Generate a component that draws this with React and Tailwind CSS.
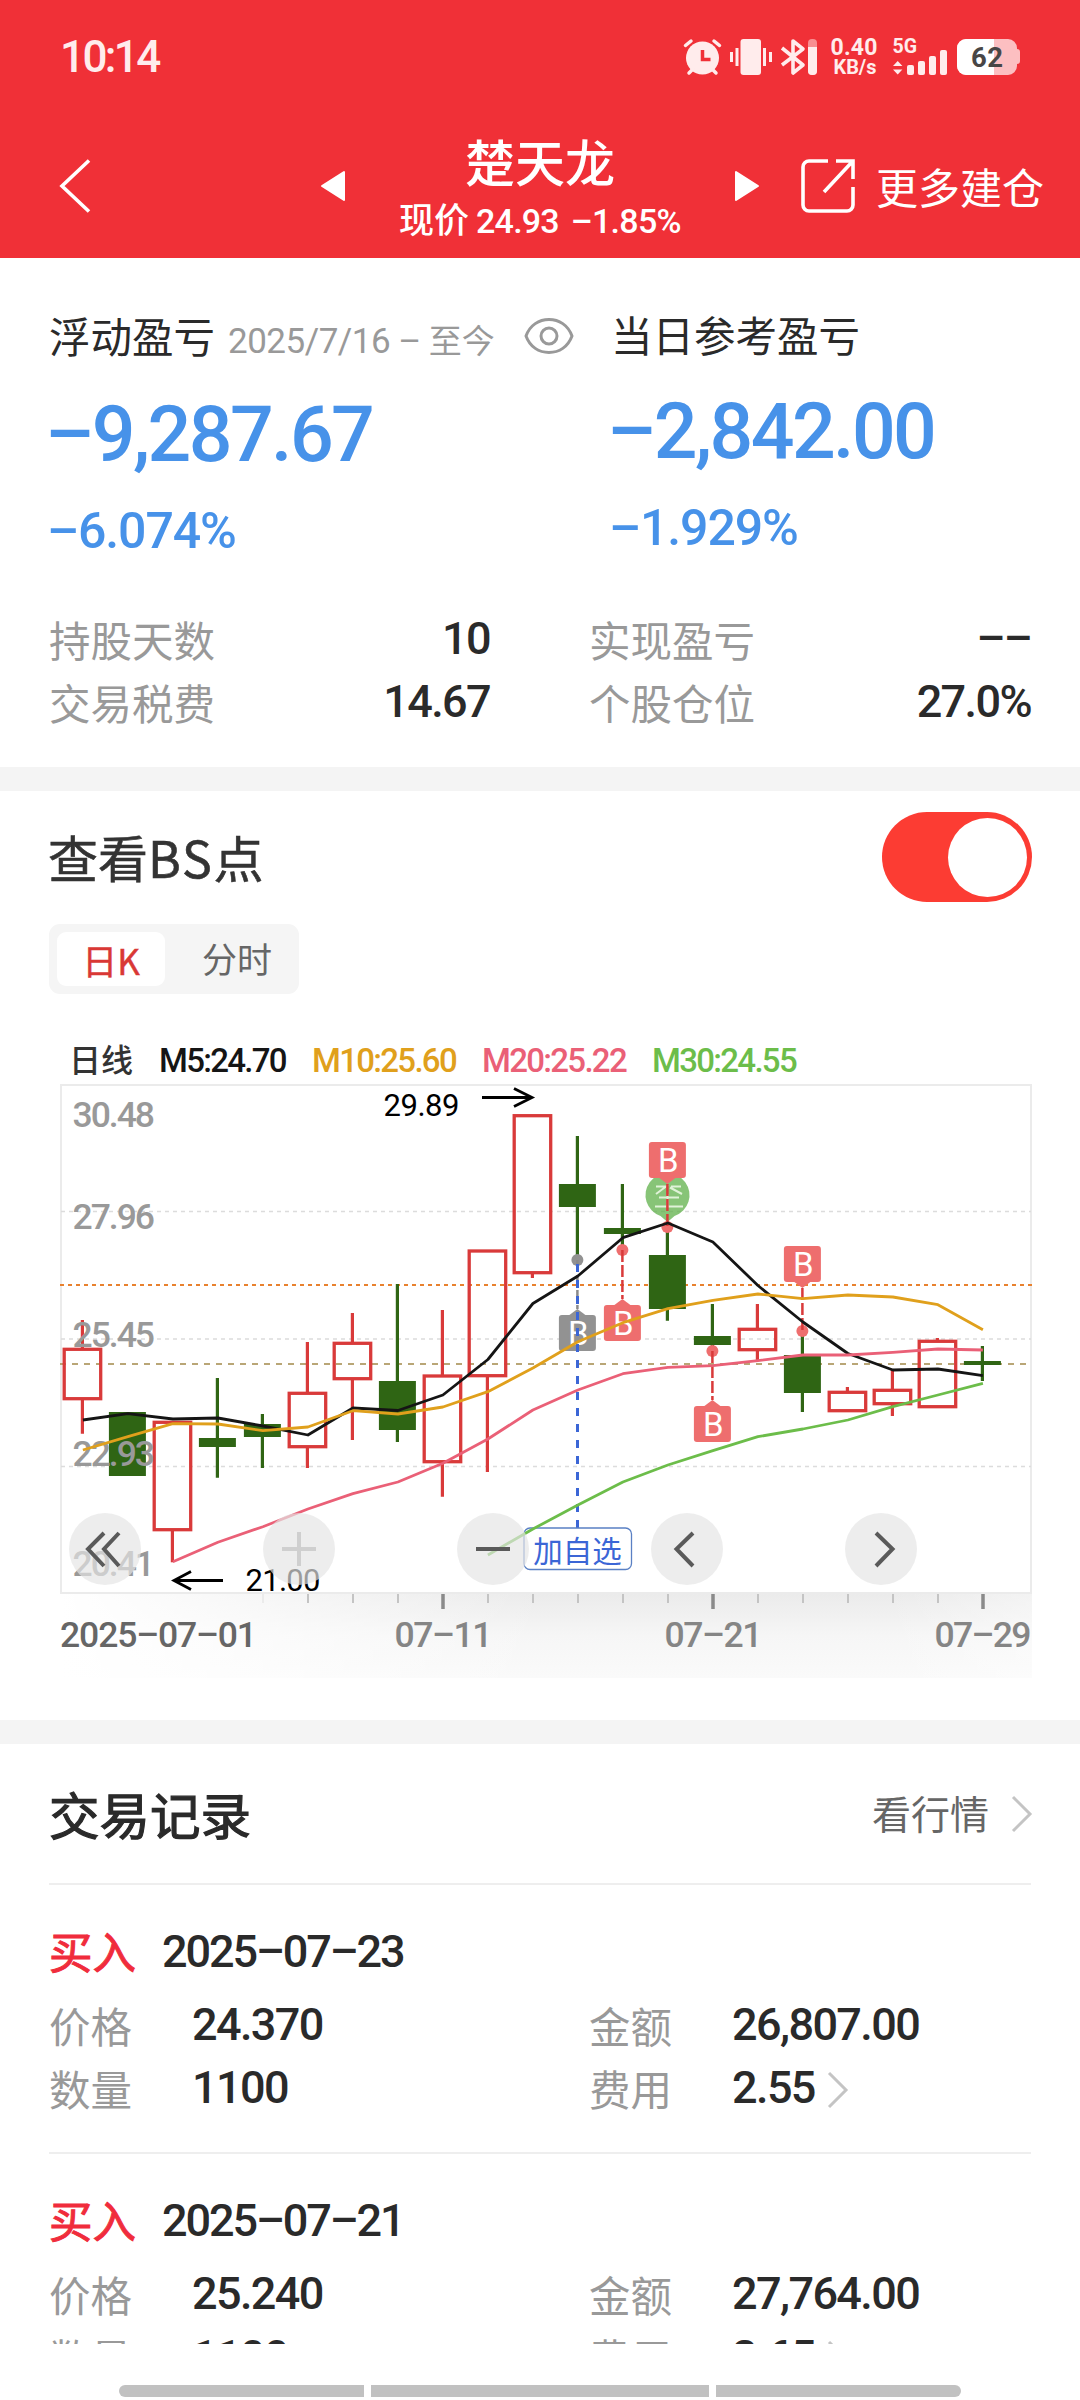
const FONT = "font-['Roboto','Noto_Sans_CJK_SC',sans-serif]";
const SVG_FONT = "Roboto, 'Noto Sans CJK SC', sans-serif";

const RED = "#d93a3a";
const GREEN = "#2f6514";

const X0 = 82.4;
const STEP = 45;
const cx = (i) => X0 + i * STEP;

// [up, bodyTop, bodyBottom, high, low]
const candles = [
  [true, 1349.3, 1398.7, 1320, 1433.7],
  [false, 1412, 1476, 1412, 1476],
  [true, 1422.3, 1529.7, 1422.3, 1562.3],
  [false, 1438, 1447, 1378, 1477.7],
  [false, 1424, 1437, 1414, 1468],
  [true, 1393.3, 1446.7, 1342, 1468],
  [true, 1343.3, 1378.7, 1313, 1440],
  [false, 1381, 1430, 1284, 1442],
  [true, 1376, 1461.7, 1310, 1496.7],
  [true, 1251, 1375.7, 1251, 1472],
  [true, 1115.7, 1272.7, 1115.7, 1278],
  [false, 1184, 1207, 1136, 1259],
  [false, 1228, 1234, 1184, 1250],
  [false, 1255, 1309, 1226.7, 1320.7],
  [false, 1336, 1345, 1304, 1351],
  [true, 1329.3, 1349.7, 1304, 1360],
  [false, 1355, 1393, 1331, 1412],
  [true, 1392.3, 1410.7, 1387, 1410.7],
  [true, 1390.3, 1403.7, 1370, 1416],
  [true, 1341.3, 1406.7, 1338, 1406.7],
  [false, 1361, 1365, 1346, 1381],
];

const averages = [
  {
    color: "#151515",
    start: 0,
    ys: [
      1420, 1413.7, 1419, 1418, 1426, 1435, 1408, 1410.5, 1395, 1359.5, 1303.5,
      1276, 1237.7, 1223, 1242, 1285.5, 1322, 1353.5, 1370, 1369, 1375.7,
    ],
  },
  {
    color: "#e0a01c",
    start: 0,
    ys: [
      1450, 1436.7, 1423.7, 1424, 1430.7, 1427, 1410.7, 1414, 1407, 1391.7,
      1368, 1341.7, 1322.7, 1308.7, 1300.3, 1294, 1298.7, 1295, 1297, 1304.7,
      1329.7,
    ],
  },
  {
    color: "#ea6077",
    start: 2,
    ys: [
      1561.7, 1542.3, 1526.7, 1509, 1493.7, 1482, 1463.3, 1439, 1410, 1390,
      1373.7, 1367.3, 1365.7, 1360.7, 1355, 1355, 1352.3, 1349, 1350,
    ],
  },
  {
    color: "#6cbd4a",
    start: 9,
    ys: [
      1555, 1529, 1505, 1482, 1465, 1450.7, 1436.7, 1429, 1420, 1406.7, 1395,
      1383.3,
    ],
  },
];

const legend = [
  { text: "M5:24.70", className: "w-[153px] text-[#151515]" },
  { text: "M10:25.60", className: "w-[170px] text-[#e0a01c]" },
  { text: "M20:25.22", className: "w-[170px] text-[#ea6077]" },
  { text: "M30:24.55", className: "w-[170px] text-[#6cbd4a]" },
];

const priceLabels = [
  ["30.48", 1127],
  ["27.96", 1229],
  ["25.45", 1347],
  ["22.93", 1466],
  ["20.41", 1576],
];

const records = [
  {
    date: "2025–07–23",
    price: "24.370",
    amount: "26,807.00",
    qty: "1100",
    fee: "2.55",
  },
  {
    date: "2025–07–21",
    price: "25.240",
    amount: "27,764.00",
    qty: "1100",
    fee: "2.65",
  },
];

function StatusBar() {
  return (
    <div className="flex h-[114px] items-center justify-between pl-[60px] pr-[55px]">
      <span className="text-[44px] font-medium tracking-[-2.600px] text-[#ffecec]">
        10:14
      </span>
      <svg width="345" height="44" viewBox="680 35 345 44" fill="#ffecec">
        {/* alarm */}
        <circle cx="702.5" cy="58" r="16.5" />
        <path
          d="M685.5 45.5 691 41M719.5 45.5 714 41M689 73l4-4M716 73l-4-4"
          stroke="#ffecec"
          strokeWidth="3.5"
          strokeLinecap="round"
        />
        <path d="M702.5 50v9.5h8" fill="none" stroke="#f03037" strokeWidth="3.5" />
        {/* vibrate */}
        <rect x="740.5" y="39" width="20.5" height="36" rx="3" />
        <path
          d="M731.5 52v10M737 48v18M764.5 48v18M770.5 52v10"
          stroke="#ffecec"
          strokeWidth="3"
        />
        {/* bluetooth */}
        <path
          d="M782 48l21 17-10 8V41l10 8-21 16"
          fill="none"
          stroke="#ffecec"
          strokeWidth="3.6"
          strokeLinejoin="round"
        />
        <rect x="808" y="39" width="9" height="36" rx="4" opacity="0.5" />
        <path d="M808 47h9v24a4 4 0 0 1-4 4h-1a4 4 0 0 1-4-4z" />
        {/* network speed */}
        <g fontFamily={SVG_FONT} fontWeight="700">
          <text x="830.5" y="54.500" fontSize="23" textLength="47">
            0.40
          </text>
          <text x="833.5" y="74" fontSize="20" textLength="43" lengthAdjust="spacingAndGlyphs">
            KB/s
          </text>
          <text x="892.500" y="52.500" fontSize="19.500" textLength="24.500" lengthAdjust="spacingAndGlyphs">
            5G
          </text>
        </g>
        <path d="M893 66l4.700-5 4.700 5zM893 69.500l4.700 5 4.700-5z" />
        <rect x="907" y="65" width="7" height="10" rx="2" />
        <rect x="918" y="61" width="7" height="14" rx="2" />
        <rect x="929" y="56" width="7" height="19" rx="2" />
        <rect x="940" y="50" width="7" height="25" rx="2" />
        {/* battery */}
        <path
          d="M966 39h42a9 9 0 0 1 9 9v1c2 0 3 1 3 3v9c0 2-1 3-3 3v2a9 9 0 0 1-9 9h-42a9 9 0 0 1-9-9V48a9 9 0 0 1 9-9z"
          fill="#fcbfc1"
        />
        <path d="M966 39h28v36h-28a9 9 0 0 1-9-9V48a9 9 0 0 1 9-9z" fill="#fff" />
        <text
          x="971"
          y="66.500"
          fontFamily={SVG_FONT}
          fontWeight="700"
          fontSize="27.500"
          fill="#484646"
          textLength="32"
        >
          62
        </text>
      </svg>
    </div>
  );
}

function Header() {
  return (
    <header className="h-[258px] bg-[#f03037] text-white">
      <StatusBar />
      <div className="flex h-[144px] items-center pl-[59px] pr-[36px]">
        <svg className="mb-[1px] shrink-0" width="33" height="56" viewBox="0 0 33 56">
          <path d="M30 2.500 3 28l27 25.500" fill="none" stroke="#fff" strokeWidth="3.600" />
        </svg>
        <svg className="ml-[228px] shrink-0" width="26" height="32" viewBox="0 0 26 32">
          <path d="M24 2v28L2 16z" fill="#fff" stroke="#fff" strokeWidth="2" strokeLinejoin="round" />
        </svg>
        <div className="flex w-[388px] flex-col items-center pt-[15px]">
          <h1 className="text-[50px] leading-[56px] font-medium">楚天龙</h1>
          <div className="flex items-center text-[34px] leading-[57px] font-medium">
            <span className="text-[35px]">现价</span>
            <span className="ml-[7px] tracking-[-0.800px]">24.93</span>
            <span className="ml-[12px] tracking-[-0.700px]">–1.85%</span>
          </div>
        </div>
        <svg className="shrink-0" width="26" height="32" viewBox="0 0 26 32">
          <path d="M2 2v28l22-14z" fill="#fff" stroke="#fff" strokeWidth="2" strokeLinejoin="round" />
        </svg>
        <svg className="ml-[40px] shrink-0" width="56" height="56" viewBox="0 0 56 56">
          <g fill="none" stroke="#fff" strokeWidth="3.600">
            <path d="M28 3H9a6 6 0 0 0-6 6v38a6 6 0 0 0 6 6h38a6 6 0 0 0 6-6V29" />
            <path d="M36 3h17v18M52 4 24 34" />
          </g>
        </svg>
        <span className="mt-[8px] ml-[20px] text-[42px] leading-none whitespace-nowrap">
          更多建仓
        </span>
      </div>
    </header>
  );
}

function EyeIcon() {
  return (
    <svg width="50" height="38" viewBox="0 0 50 38" fill="none" stroke="#999" strokeWidth="3">
      <path d="M2 19C6 8 15 2.500 25 2.500S44 8 48 19c-4 11-13 16.500-23 16.500S6 30 2 19z" strokeLinejoin="round" />
      <circle cx="25" cy="19" r="8" />
    </svg>
  );
}

function Stat({ label, value }) {
  return (
    <div className="flex h-[63px] items-center justify-between">
      <span className="mt-[10px] text-[41.5px] text-[#999]">{label}</span>
      <span className="text-[45px] font-medium tracking-[-1.600px] text-[#2a2a2a]">
        {value}
      </span>
    </div>
  );
}

function Profit({ amount, percent }) {
  return (
    <div className="font-medium text-[#4792e9]">
      <div className="-ml-[4px] text-[77px] leading-[90px] tracking-[-2.600px]">{amount}</div>
      <div className="-ml-[2px] mt-[21px] text-[50px] leading-[60px] tracking-[-1.100px]">
        {percent}
      </div>
    </div>
  );
}

function Summary() {
  return (
    <section className="h-[509px] px-[49px] pt-[49px]">
      <div className="flex">
        <div className="w-[562px]">
          <div className="flex h-[62px] items-center">
            <span className="mt-[2px] text-[41.5px] text-[#2a2a2a]">浮动盈亏</span>
            <span className="ml-[13px] mt-[8px] flex items-center text-[#999]">
              <span className="text-[35px] tracking-[-0.500px]">2025/7/16 –</span>
              <span className="ml-[8px] text-[33px]">至今</span>
            </span>
            <span className="mb-[4px] ml-[29px]">
              <EyeIcon />
            </span>
          </div>
          <div className="mt-[21px]">
            <Profit amount="–9,287.67" percent="–6.074%" />
          </div>
        </div>
        <div>
          <div className="flex h-[60px] items-center pt-[2px] text-[41.5px] text-[#2a2a2a]">
            当日参考盈亏
          </div>
          <div className="mt-[20px]">
            <Profit amount="–2,842.00" percent="–1.929%" />
          </div>
        </div>
      </div>
      <div className="mt-[46px] flex justify-between">
        <div className="w-[441px]">
          <Stat label="持股天数" value="10" />
          <Stat label="交易税费" value="14.67" />
        </div>
        <div className="w-[442px]">
          <Stat label="实现盈亏" value="––" />
          <Stat label="个股仓位" value="27.0%" />
        </div>
      </div>
    </section>
  );
}

function Marker({ x, top, dotY, down, color, line = RED }) {
  const from = down ? top + 42 : dotY;
  const to = down ? dotY : top - 6;
  return (
    <g>
      <circle cx={x} cy={dotY} r="6" fill={color} />
      <path d={`M${x} ${from}V${to}`} stroke={line} strokeWidth="2.500" strokeDasharray="12 3" />
      <rect x={x - 18.5} y={top} width="37" height="36" rx="3" fill={color} />
      {down ? (
        <path d={`M${x - 8} ${top + 36}h16l-8 6z`} fill={color} />
      ) : (
        <path d={`M${x - 8} ${top}h16l-8 -6z`} fill={color} />
      )}
      <text x={x + 1} y={top + 30} fontSize="33" fill="#fff" textAnchor="middle">
        B
      </text>
    </g>
  );
}

function RoundButton({ x, faded, children }) {
  return (
    <g>
      <circle cx={x} cy="1549" r="36" fill="#e4e4e4" fillOpacity="0.68" />
      <g
        transform={`translate(${x} 1549)`}
        fill="none"
        stroke={faded ? "#cfcfcf" : "#5a5a5a"}
        strokeWidth="4"
      >
        {children}
      </g>
    </g>
  );
}

function Chart() {
  return (
    <svg
      className="block"
      width="1080"
      height="602"
      viewBox="0 1082 1080 602"
      fontFamily={SVG_FONT}
    >
      <defs>
        <linearGradient id="axisShade" x1="0" y1="0" x2="0" y2="1">
          <stop offset="0" stopColor="#ebebeb" />
          <stop offset="0.5" stopColor="#f6f6f6" />
          <stop offset="1" stopColor="#fafafa" />
        </linearGradient>
        <linearGradient id="axisFade" x1="0" y1="0" x2="1" y2="0">
          <stop offset="0" stopColor="#fff" />
          <stop offset="0.2" stopColor="#fff" stopOpacity="0.6" />
          <stop offset="0.5" stopColor="#fff" stopOpacity="0" />
          <stop offset="0.85" stopColor="#fff" stopOpacity="0" />
          <stop offset="1" stopColor="#fff" stopOpacity="0.4" />
        </linearGradient>
      </defs>

      <rect x="61" y="1594" width="971" height="84" fill="url(#axisShade)" />
      <rect x="61" y="1594" width="971" height="84" fill="url(#axisFade)" />
      <rect x="61" y="1085" width="970" height="508" fill="none" stroke="#ebebeb" strokeWidth="2" />
      <path
        d="M61 1211.500H1031M61 1339H1031M61 1466.500H1031"
        stroke="#dcdcdc"
        strokeWidth="1.300"
        strokeDasharray="4 4"
      />
      <path d="M60 1285H1032" stroke="#e8812e" strokeWidth="2" strokeDasharray="4 4" />
      <path d="M60 1364H1032" stroke="#b9a676" strokeWidth="2" strokeDasharray="6 6" />

      {candles.map(([up, top, bottom, high, low], i) => {
        const x = cx(i);
        const color = up ? RED : GREEN;
        return (
          <g key={i}>
            <path
              d={`M${x} ${high}V${top}M${x} ${bottom}V${low}`}
              stroke={color}
              strokeWidth="3.200"
            />
            {up ? (
              <rect
                x={x - 18.2}
                y={top}
                width="36.500"
                height={bottom - top}
                fill="none"
                stroke={color}
                strokeWidth="3.300"
              />
            ) : (
              <rect x={x - 18.5} y={top} width="37" height={bottom - top} fill={color} />
            )}
          </g>
        );
      })}

      <g fill="#999" fontSize="35.500" fontWeight="500">
        {priceLabels.map(([text, y]) => (
          <text key={text} x="72.500" y={y} textLength="82.500">
            {text}
          </text>
        ))}
      </g>

      {/* high / low */}
      <g fontSize="31" fill="#000">
        <text x="383.500" y="1116" textLength="76">
          29.89
        </text>
        <text x="245.500" y="1590.500" textLength="75">
          21.00
        </text>
      </g>
      <path
        d="M482 1097.500h50M514 1088.500l18 9-18 9M223 1580.500h-49M191 1571.500l-17 9 17 9"
        fill="none"
        stroke="#000"
        strokeWidth="2.800"
      />

      {/* green pin behind the buy point */}
      <path
        d="M667.500 1222l-7-6a22 22 0 1 1 14 0z"
        fill="#5fb04a"
        fillOpacity="0.75"
      />
      <path
        d="M656 1186.500h10l-10 7.500M671 1186.500h10M670 1187.500l12 6.500M659 1197.500h20M667.500 1194v12M655 1206.500h28"
        fill="none"
        stroke="#e0f2d8"
        strokeWidth="2"
      />

      <Marker x={577.4} top={1315} dotY={1260} color="#929292" line="#8a8a8a" />
      <Marker x={622.4} top={1305} dotY={1250} color="#ee6e6e" />
      <Marker x={667.4} top={1142} dotY={1227} down color="#ee6e6e" />
      <Marker x={712.4} top={1406} dotY={1351} color="#ee6e6e" />
      <Marker x={802.4} top={1246} dotY={1331} down color="#ee6e6e" />

      <path
        d="M577.500 1264V1528"
        stroke="#3b66d6"
        strokeWidth="3"
        strokeDasharray="8 8"
      />
      <rect x="524" y="1528" width="107.500" height="41.500" rx="6" fill="#fff" stroke="#5a80c4" strokeWidth="1.300" />
      <text x="577.500" y="1561.500" fontSize="29.500" fill="#3b66d6" textAnchor="middle">
        加自选
      </text>

      {averages.map((line) => (
        <polyline
          key={line.color}
          points={line.ys.map((y, i) => `${cx(i + line.start) + 0.5},${y}`).join(" ")}
          fill="none"
          stroke={line.color}
          strokeWidth="2.800"
          strokeLinejoin="round"
        />
      ))}

      {/* ticks and dates */}
      {candles.map((_, i) => {
        if (i < 4) return null;
        const major = (i - 8) % 6 === 0;
        return (
          <path
            key={i}
            d={`M${cx(i) + 0.6} 1594v${major ? 15 : 9}`}
            stroke={major ? "#8a8a8a" : i === 4 ? "#ebebeb" : "#c4c4c4"}
            strokeWidth={major ? 3.5 : 2}
          />
        );
      })}
      <g fontSize="35.500" fontWeight="500" fill="#858585">
        <text x="60" y="1646.500" textLength="197" fill="#666">
          2025–07–01
        </text>
        <text x="394.500" y="1646.500" textLength="98">
          07–11
        </text>
        <text x="664.500" y="1646.500" textLength="98">
          07–21
        </text>
        <text x="934.500" y="1646.500" textLength="97">
          07–29
        </text>
      </g>

      <RoundButton x={105}>
        <path d="M-1-16-17 0-1 17M14-16-1 0 14 17" />
      </RoundButton>
      <RoundButton x={299} faded>
        <path d="M-17 0H17M0-17V17" />
      </RoundButton>
      <RoundButton x={493}>
        <path d="M-17 0H17" />
      </RoundButton>
      <RoundButton x={687}>
        <path d="M6-16-10.500 0 6 17" />
      </RoundButton>
      <RoundButton x={881}>
        <path d="M-5-16 11.500 0-5 17" />
      </RoundButton>
    </svg>
  );
}

function BsPanel() {
  return (
    <section className="h-[929px] pt-[21px]">
      <div className="flex h-[90px] items-center justify-between pl-[48px] pr-[48px]">
        <h2 className="mb-[1px] font-['Noto_Sans_CJK_SC',sans-serif] text-[50px] text-[#333] [-webkit-text-stroke:0.6px]">
          查看<span className="tracking-[1.800px]">BS</span>点
        </h2>
        <div className="flex h-[90px] w-[150px] items-center justify-end rounded-full bg-[#fc3c33] pr-[5px]">
          <div className="size-[79px] rounded-full bg-white" />
        </div>
      </div>
      <div className="mt-[22px] ml-[49px] flex h-[70px] w-[250px] items-center rounded-[11px] bg-[#f5f5f5] pl-[8px] text-[35px] leading-none">
        <div className="flex h-[54px] w-[108px] items-center justify-center rounded-[9px] bg-white font-['Noto_Sans_CJK_SC',sans-serif] text-[#d93835] [-webkit-text-stroke:0.5px]">
          日K
        </div>
        <div className="mt-[5px] ml-[37px] text-[#666]">分时</div>
      </div>
      <div className="flex h-[88px] items-end pl-[69px] text-[33px] leading-[42px] font-medium tracking-[-1.700px]">
        <span className="w-[90px] text-[32px] tracking-normal text-[#333]">日线</span>
        {legend.map((item) => (
          <span key={item.text} className={item.className}>
            {item.text}
          </span>
        ))}
      </div>
      <Chart />
    </section>
  );
}

function Chevron({ color = "#c4c4c4" }) {
  return (
    <svg width="22" height="38" viewBox="0 0 22 38">
      <path d="M2 2 19 19 2 36" fill="none" stroke={color} strokeWidth="3" />
    </svg>
  );
}

function Field({ label, value, arrow }) {
  return (
    <div className="flex h-[63px] w-[540px] shrink-0 items-center">
      <span className="mt-[3px] w-[143px] text-[41.5px] text-[#999]">{label}</span>
      <span className="mb-[6px] text-[45px] font-medium tracking-[-1.600px] text-[#2a2a2a]">
        {value}
      </span>
      {arrow && (
        <span className="mb-[2px] ml-[12px]">
          <Chevron />
        </span>
      )}
    </div>
  );
}

function Record({ item }) {
  return (
    <div className="h-[269px] shrink-0 border-t-2 border-[#eeeeee] pt-[38px]">
      <div className="flex h-[64px] items-center">
        <span className="text-[43.5px] text-[#f02c3c] [-webkit-text-stroke:1px]">买入</span>
        <span className="mb-[7px] ml-[26px] text-[45px] font-medium tracking-[-2.100px] text-[#2a2a2a]">
          {item.date}
        </span>
      </div>
      <div className="mt-[9px] flex">
        <Field label="价格" value={item.price} />
        <Field label="金额" value={item.amount} />
      </div>
      <div className="flex">
        <Field label="数量" value={item.qty} />
        <Field label="费用" value={item.fee} arrow />
      </div>
    </div>
  );
}

function Records() {
  return (
    <section className="h-[600px] overflow-hidden px-[49px]">
      <div className="flex h-[139px] items-center justify-between">
        <h2 className="mt-[8px] text-[50.5px] text-[#2a2a2a] [-webkit-text-stroke:1.2px]">
          交易记录
        </h2>
        <span className="-mr-[2px] flex items-center gap-[22px] text-[39px] text-[#666]">
          <span className="mt-[6px]">看行情</span>
          <Chevron />
        </span>
      </div>
      {records.map((item) => (
        <Record key={item.date} item={item} />
      ))}
    </section>
  );
}

export default function App() {
  return (
    <div className={`${FONT} flex h-[2400px] w-[1080px] flex-col overflow-hidden bg-white`}>
      <Header />
      <Summary />
      <div className="h-[24px] bg-[#f4f4f4]" />
      <BsPanel />
      <div className="h-[24px] bg-[#f4f4f4]" />
      <Records />
      <div className="mt-[41px] flex h-[12px] justify-center gap-[7px]">
        <div className="w-[245px] rounded-l-full bg-[#c1c1c1]" />
        <div className="w-[338px] bg-[#c1c1c1]" />
        <div className="w-[245px] rounded-r-full bg-[#c1c1c1]" />
      </div>
    </div>
  );
}
